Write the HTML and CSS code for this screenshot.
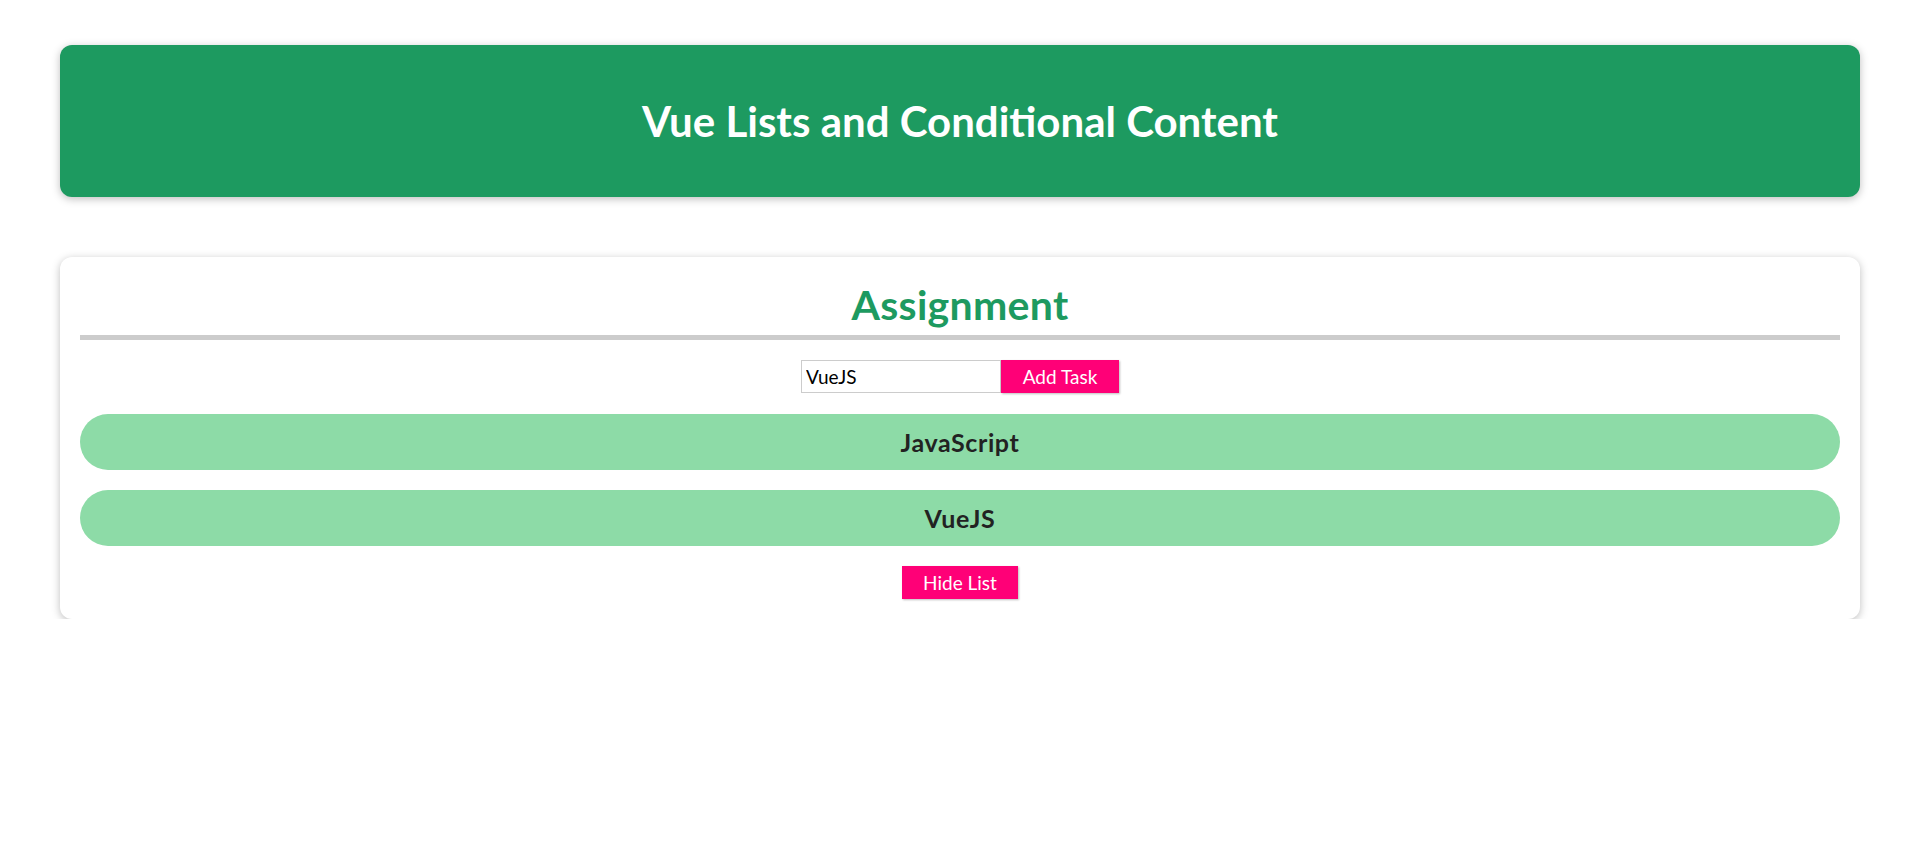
FILE: index.html
```html
<!DOCTYPE html>
<html lang="en">
<head>
<meta charset="utf-8">
<title>Vue Lists and Conditional Content</title>
<link rel="stylesheet" href="styles.css">
</head>
<body>
  <div class="page">
    <header class="hero">
      <h1 class="hero-title">Vue Lists and Conditional Content</h1>
    </header>
    <section class="card">
      <h2 class="card-title">Assignment</h2>
      <div class="add-row">
        <input class="task-input" type="text" value="VueJS">
        <button class="btn">Add Task</button>
      </div>
      <ul class="task-list">
        <li class="task">JavaScript</li>
        <li class="task">VueJS</li>
      </ul>
      <div class="toggle-row">
        <button class="btn btn-toggle">Hide List</button>
      </div>
    </section>
  </div>
</body>
</html>
```

FILE: styles.css
```css
* {
  box-sizing: border-box;
}

html, body {
  margin: 0;
  padding: 0;
  background: #ffffff;
  font-family: "Lato", "Open Sans", sans-serif;
}

.page {
  margin: 45px 53px 0 60px;
  display: flex;
  flex-direction: column;
  gap: 60px;
}

.hero {
  background: #1d9a60;
  border-radius: 12px;
  box-shadow: 0 2px 8px rgba(0, 0, 0, 0.26);
  height: 152px;
  display: flex;
  align-items: center;
  justify-content: center;
}

.hero-title {
  margin: 0;
  color: #ffffff;
  font-size: 42px;
  font-weight: 700;
  line-height: 52px;
}

.card {
  background: #ffffff;
  border-radius: 12px;
  box-shadow: 0 2px 8px rgba(0, 0, 0, 0.26);
  padding: 20px;
  display: flex;
  flex-direction: column;
}

.card-title {
  margin: 4px 0 0;
  padding-bottom: 6px;
  border-bottom: 5px solid #cccccc;
  color: #1d9a60;
  font-size: 41px;
  font-weight: 700;
  letter-spacing: 0.3px;
  line-height: 48px;
  text-align: center;
}

.add-row {
  margin-top: 20px;
  display: flex;
  justify-content: center;
}

.task-input {
  width: 200px;
  height: 33px;
  border: 1px solid #cccccc;
  padding: 0 4px;
  font: inherit;
  font-size: 19px;
  color: #000000;
  outline: none;
}

.btn {
  height: 33px;
  border: none;
  background: #ff0077;
  color: #ffffff;
  font: inherit;
  font-size: 19px;
  padding: 0;
  box-shadow: 1px 1px 2px rgba(0, 0, 0, 0.26);
  cursor: pointer;
}

.add-row .btn {
  width: 118px;
}

.task-list {
  list-style: none;
  margin: 21px 0 0;
  padding: 0;
  display: flex;
  flex-direction: column;
  gap: 20px;
}

.task {
  height: 56px;
  border-radius: 28px;
  background: #8ddba7;
  color: #222222;
  font-size: 25px;
  font-weight: 700;
  letter-spacing: 0.6px;
  display: flex;
  align-items: center;
  justify-content: center;
}

.toggle-row {
  margin-top: 20px;
  display: flex;
  justify-content: center;
}

.btn-toggle {
  width: 116px;
}
```
